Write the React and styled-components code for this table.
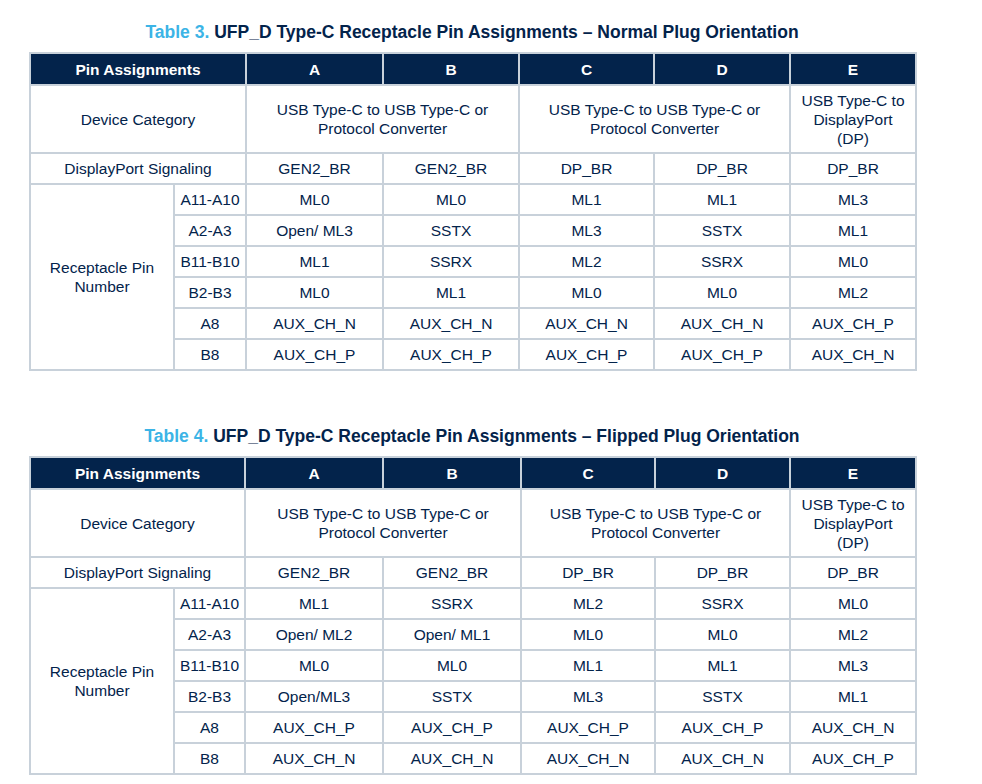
import React from "react";
import styled, { createGlobalStyle } from "styled-components";

const Global = createGlobalStyle`
  html, body { margin: 0; padding: 0; background: #ffffff; }
  body { font-family: "Liberation Sans", Arial, sans-serif; color: #03234b; }
`;

const Page = styled.div`
  width: 982px;
  padding: 19px 0 0 29px;
  box-sizing: border-box;
  display: flex;
  flex-direction: column;
`;

const Section = styled.section`
  display: flex;
  flex-direction: column;
  width: 886px;
  margin-bottom: ${(p) => p.$gap || 0}px;
`;

const Title = styled.h2`
  margin: 0 0 7px;
  font-size: 17.5px;
  line-height: 26px;
  font-weight: 700;
  text-align: center;
  color: #03234b;
`;

const TitleNum = styled.span`
  color: #3cb4e6;
`;

const Table = styled.table`
  border-collapse: collapse;
  table-layout: fixed;
  width: 886px;
  font-size: 15.5px;
  line-height: 19px;
  color: #03234b;
`;

const HeadCell = styled.th`
  background: #03234b;
  color: #ffffff;
  font-weight: 700;
  border: 2px solid #c8d1da;
  height: 30px;
  padding: 0;
  text-align: center;
`;

const Cell = styled.td`
  border: 2px solid #c8d1da;
  height: ${(p) => p.$h || 29}px;
  padding: 0 4px;
  text-align: center;
  vertical-align: middle;
`;

const T1_COLS = [144, 72, 137, 136, 135, 136, 126];
const T2_COLS = [144, 71, 138, 138, 134, 135, 126];

const PinTable = ({ num, subtitle, cols, signaling, rows }) => (
  <>
    <Title>
      <TitleNum>Table {num}.</TitleNum> UFP_D Type-C Receptacle Pin Assignments – {subtitle}
    </Title>
    <Table>
      <colgroup>
        {cols.map((w, i) => (
          <col key={i} style={{ width: w }} />
        ))}
      </colgroup>
      <thead>
        <tr>
          <HeadCell colSpan={2}>Pin Assignments</HeadCell>
          {["A", "B", "C", "D", "E"].map((l) => (
            <HeadCell key={l}>{l}</HeadCell>
          ))}
        </tr>
      </thead>
      <tbody>
        <tr>
          <Cell colSpan={2} $h={66}>Device Category</Cell>
          <Cell colSpan={2} $h={66}>
            USB Type-C to USB Type-C or
            <br />
            Protocol Converter
          </Cell>
          <Cell colSpan={2} $h={66}>
            USB Type-C to USB Type-C or
            <br />
            Protocol Converter
          </Cell>
          <Cell $h={66}>
            USB Type-C to
            <br />
            DisplayPort
            <br />
            (DP)
          </Cell>
        </tr>
        <tr>
          <Cell colSpan={2}>DisplayPort Signaling</Cell>
          {signaling.map((s, i) => (
            <Cell key={i}>{s}</Cell>
          ))}
        </tr>
        {rows.map((r, i) => (
          <tr key={r[0]}>
            {i === 0 && (
              <Cell rowSpan={rows.length}>
                Receptacle Pin
                <br />
                Number
              </Cell>
            )}
            {r.map((v, j) => (
              <Cell key={j}>{v}</Cell>
            ))}
          </tr>
        ))}
      </tbody>
    </Table>
  </>
);

const SIG = ["GEN2_BR", "GEN2_BR", "DP_BR", "DP_BR", "DP_BR"];

const ROWS3 = [
  ["A11-A10", "ML0", "ML0", "ML1", "ML1", "ML3"],
  ["A2-A3", "Open/ ML3", "SSTX", "ML3", "SSTX", "ML1"],
  ["B11-B10", "ML1", "SSRX", "ML2", "SSRX", "ML0"],
  ["B2-B3", "ML0", "ML1", "ML0", "ML0", "ML2"],
  ["A8", "AUX_CH_N", "AUX_CH_N", "AUX_CH_N", "AUX_CH_N", "AUX_CH_P"],
  ["B8", "AUX_CH_P", "AUX_CH_P", "AUX_CH_P", "AUX_CH_P", "AUX_CH_N"],
];

const ROWS4 = [
  ["A11-A10", "ML1", "SSRX", "ML2", "SSRX", "ML0"],
  ["A2-A3", "Open/ ML2", "Open/ ML1", "ML0", "ML0", "ML2"],
  ["B11-B10", "ML0", "ML0", "ML1", "ML1", "ML3"],
  ["B2-B3", "Open/ML3", "SSTX", "ML3", "SSTX", "ML1"],
  ["A8", "AUX_CH_P", "AUX_CH_P", "AUX_CH_P", "AUX_CH_P", "AUX_CH_N"],
  ["B8", "AUX_CH_N", "AUX_CH_N", "AUX_CH_N", "AUX_CH_N", "AUX_CH_P"],
];

export default function App() {
  return (
    <>
      <Global />
      <Page>
        <Section $gap={52}>
          <PinTable num={3} subtitle="Normal Plug Orientation" cols={T1_COLS} signaling={SIG} rows={ROWS3} />
        </Section>
        <Section>
          <PinTable num={4} subtitle="Flipped Plug Orientation" cols={T2_COLS} signaling={SIG} rows={ROWS4} />
        </Section>
      </Page>
    </>
  );
}
